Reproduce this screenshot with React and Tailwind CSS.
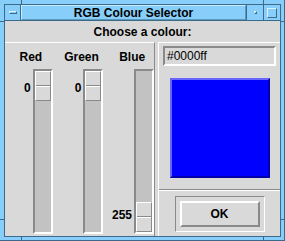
import React from "react";

const FONT = "font-['Liberation_Sans',Arial,sans-serif]";

function Slider({ label, value, pos }) {
  // pos: "top" or "bottom" — where the thumb sits in the trough
  return (
    <div className="flex w-[44px] flex-col items-center">
      <div className="h-[22px] pt-[3px] text-[12px] font-bold leading-[14px] text-black">
        {label}
      </div>
      <div className="flex h-[165px] w-full">
        <div className="relative flex-1">
          <span
            className={`absolute right-[2px] text-[12px] font-bold leading-[12px] text-black ${
              pos === "top" ? "top-[13px]" : "top-[140px]"
            }`}
          >
            {value}
          </span>
        </div>
        <div
          className={`flex h-full w-[20px] flex-col border-2 border-t-[#8a8a8a] border-l-[#8a8a8a] border-r-white border-b-white bg-[#c2c2c2] ${
            pos === "top" ? "justify-start" : "justify-end"
          }`}
        >
          <div className="flex h-[30px] w-[16px] flex-col border border-t-white border-l-white border-r-[#8a8a8a] border-b-[#8a8a8a] bg-[#d9d9d9]">
            <div className="flex-1" />
            <div className="h-px bg-[#8a8a8a]" />
            <div className="h-px bg-white" />
            <div className="flex-1" />
          </div>
        </div>
      </div>
    </div>
  );
}

export default function App() {
  return (
    <div className={`relative h-[241px] w-[285px] bg-[#87cefa] p-[4px] ${FONT}`}>
      {/* frame corner marks */}
      <div className="absolute left-[21px] top-0 h-[4px] w-px bg-[#3b6b89]" />
      <div className="absolute left-[263px] top-0 h-[4px] w-px bg-[#3b6b89]" />
      <div className="absolute bottom-0 left-[21px] h-[4px] w-px bg-[#3b6b89]" />
      <div className="absolute bottom-0 left-[263px] h-[4px] w-px bg-[#3b6b89]" />
      <div className="absolute left-0 top-[21px] h-px w-[4px] bg-[#3b6b89]" />
      <div className="absolute right-0 top-[21px] h-px w-[4px] bg-[#3b6b89]" />
      <div className="absolute left-0 top-[219px] h-px w-[4px] bg-[#3b6b89]" />
      <div className="absolute right-0 top-[219px] h-px w-[4px] bg-[#3b6b89]" />
      <div className="absolute bottom-0 left-0 h-px w-full bg-[#3b6b89]" />
      <div className="absolute right-0 top-0 h-full w-px bg-[#3b6b89]" />

      <div className="flex h-full flex-col border border-[#3b6b89]">
        {/* Title bar */}
        <div className="flex h-[16px] border-b border-[#3b6b89]">
          <div className="flex w-[16px] items-center justify-center border-r border-[#3b6b89]">
            <div className="h-[3px] w-[8px] border-t border-l border-t-[#d8f2ff] border-l-[#d8f2ff] border-b border-r border-b-[#3b6b89] border-r-[#3b6b89]" />
          </div>
          <div className="flex flex-1 items-center justify-center border-t border-l border-t-[#c4ebff] border-l-[#c4ebff] border-b border-r border-b-[#5c98bc] border-r-[#5c98bc] text-[12px] font-bold leading-none text-black">
            RGB Colour Selector
          </div>
          <div className="flex w-[17px] items-center justify-center border-l border-[#3b6b89]">
            <div className="h-[3px] w-[3px] border-t border-l border-t-[#d8f2ff] border-l-[#d8f2ff] border-b border-r border-b-[#3b6b89] border-r-[#3b6b89]" />
          </div>
          <div className="flex w-[17px] items-center justify-center border-l border-[#3b6b89]">
            <div className="h-[10px] w-[10px] border-t border-l border-t-[#d8f2ff] border-l-[#d8f2ff] border-b border-r border-b-[#3b6b89] border-r-[#3b6b89]" />
          </div>
        </div>

        {/* Body */}
        <div className="flex flex-1 flex-col bg-[#d9d9d9]">
          <div className="flex h-[21px] items-center justify-center text-[12px] font-bold text-black">
            Choose a colour:
          </div>
          <div className="flex flex-1">
            {/* Sliders */}
            <div className="flex w-[150px] gap-[7px] border-t border-r border-t-white border-r-[#8a8a8a] pl-[4px] pt-[4px]">
              <Slider label="Red" value="0" pos="top" />
              <Slider label="Green" value="0" pos="top" />
              <Slider label="Blue" value="255" pos="bottom" />
            </div>
            {/* Colour preview */}
            <div className="ml-[3px] flex flex-1 flex-col border-t border-l border-t-white border-l-white">
              <div className="px-[4px] pt-[3px]">
                <div className="flex h-[20px] items-center border-2 border-t-[#8a8a8a] border-l-[#8a8a8a] border-r-white border-b-white pl-[2px] text-[12px] leading-none text-black">
                  #0000ff
                </div>
              </div>
              <div className="flex h-[123px] items-start justify-center pt-[12px]">
                <div className="h-[100px] w-[100px] border-2 border-t-[#6666ff] border-l-[#6666ff] border-r-[#0000a8] border-b-[#0000a8] bg-[#0000ff]" />
              </div>
              <div className="h-px bg-[#8a8a8a]" />
              <div className="h-px bg-white" />
              <div className="flex flex-1 items-start justify-center pt-[5px]">
                <div className="border border-t-[#8a8a8a] border-l-[#8a8a8a] border-r-white border-b-white p-[4px]">
                  <div className="flex h-[26px] w-[80px] items-center justify-center border-2 border-t-white border-l-white border-r-[#8a8a8a] border-b-[#8a8a8a] text-[12px] font-bold text-black">
                    OK
                  </div>
                </div>
              </div>
            </div>
          </div>
        </div>
      </div>
    </div>
  );
}
